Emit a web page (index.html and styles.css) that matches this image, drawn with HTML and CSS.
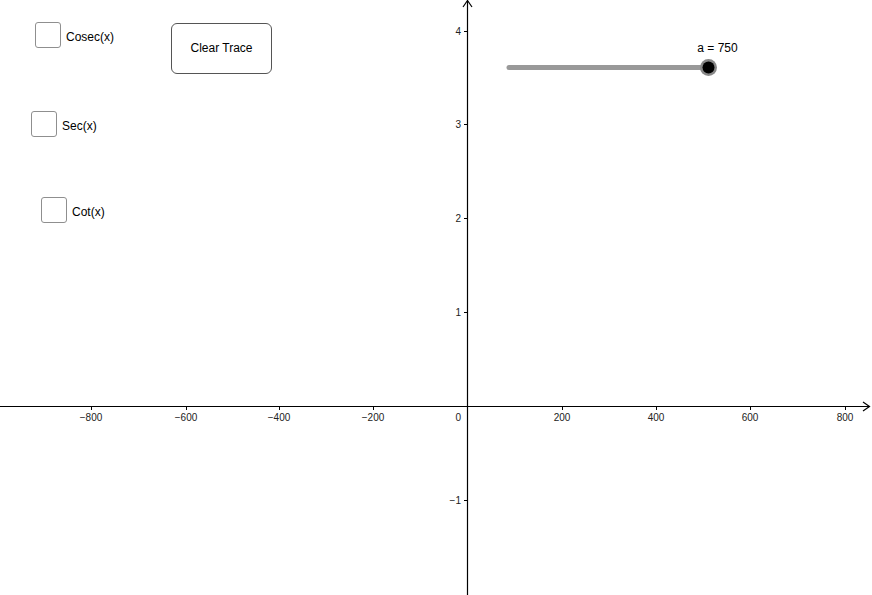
FILE: index.html
```html
<!DOCTYPE html>
<html>
<head>
<meta charset="utf-8">
<link rel="stylesheet" href="styles.css">
</head>
<body>
<div class="canvas">
  <svg class="graph" width="872" height="595" viewBox="0 0 872 595">
    <g stroke="#000" stroke-width="1.2" fill="none">
      <line x1="0" y1="406.5" x2="869" y2="406.5"/>
      <line x1="467.5" y1="595" x2="467.5" y2="1"/>
      <polyline points="863,402 869.5,406.5 863,411"/>
      <polyline points="463,7 467.5,0.5 472,7"/>
    </g>
    <g stroke="#000" stroke-width="1">
      <line x1="91.5" y1="406" x2="91.5" y2="410"/>
      <line x1="186.5" y1="406" x2="186.5" y2="410"/>
      <line x1="279.5" y1="406" x2="279.5" y2="410"/>
      <line x1="373.5" y1="406" x2="373.5" y2="410"/>
      <line x1="562.5" y1="406" x2="562.5" y2="410"/>
      <line x1="656.5" y1="406" x2="656.5" y2="410"/>
      <line x1="750.5" y1="406" x2="750.5" y2="410"/>
      <line x1="845.5" y1="406" x2="845.5" y2="410"/>
      <line x1="464" y1="31.5" x2="468" y2="31.5"/>
      <line x1="464" y1="124.5" x2="468" y2="124.5"/>
      <line x1="464" y1="218.5" x2="468" y2="218.5"/>
      <line x1="464" y1="312.5" x2="468" y2="312.5"/>
      <line x1="464" y1="500.5" x2="468" y2="500.5"/>
    </g>
    <g class="lbl" text-anchor="middle">
      <text x="91" y="421">−800</text>
      <text x="186" y="421">−600</text>
      <text x="279" y="421">−400</text>
      <text x="373" y="421">−200</text>
      <text x="562" y="421">200</text>
      <text x="656" y="421">400</text>
      <text x="750" y="421">600</text>
      <text x="845" y="421">800</text>
    </g>
    <g class="lbl" text-anchor="end">
      <text x="461" y="421">0</text>
      <text x="461" y="35">4</text>
      <text x="461" y="128">3</text>
      <text x="461" y="222">2</text>
      <text x="461" y="316">1</text>
      <text x="461" y="504">−1</text>
    </g>
    <line x1="509" y1="67.5" x2="708" y2="67.5" stroke="#999" stroke-width="5" stroke-linecap="round"/>
    <circle cx="708.5" cy="67.5" r="8.5" fill="#888"/>
    <circle cx="708.5" cy="67.5" r="6" fill="#000"/>
    <text class="slabel" x="717.5" y="52" text-anchor="middle">a = 750</text>
  </svg>

  <label class="check cosec"><span class="box"></span><span class="ctext">Cosec(x)</span></label>
  <label class="check sec"><span class="box"></span><span class="ctext">Sec(x)</span></label>
  <label class="check cot"><span class="box"></span><span class="ctext">Cot(x)</span></label>

  <button class="btn">Clear Trace</button>
</div>
</body>
</html>
```

FILE: styles.css
```css
html, body {
  margin: 0;
  padding: 0;
  background: #fff;
}
.canvas {
  position: relative;
  width: 872px;
  height: 595px;
  overflow: hidden;
  font-family: "Liberation Sans", Arial, sans-serif;
}
.graph {
  position: absolute;
  left: 0;
  top: 0;
}
.lbl {
  font-family: "Liberation Sans", Arial, sans-serif;
  font-size: 10px;
  fill: #222;
}
.slabel {
  font-family: "Liberation Sans", Arial, sans-serif;
  font-size: 12px;
  fill: #000;
}
.check {
  position: absolute;
  display: flex;
  align-items: center;
  gap: 5px;
  font-size: 12px;
  color: #000;
}
.box {
  width: 24px;
  height: 24px;
  border: 1.5px solid #8f8f8f;
  border-radius: 3px;
  box-sizing: content-box;
  background: #fff;
}
.cosec { left: 35px; top: 22px; }
.sec { left: 31px; top: 111px; }
.cot { left: 41px; top: 197px; }
.ctext { margin-top: 3px; }
.btn {
  position: absolute;
  left: 171px;
  top: 23px;
  width: 101px;
  height: 51px;
  border: 1.5px solid #555;
  border-radius: 6px;
  background: #fff;
  font-family: "Liberation Sans", Arial, sans-serif;
  font-size: 12px;
  color: #000;
  padding: 0;
  padding-bottom: 2px;
}
```
